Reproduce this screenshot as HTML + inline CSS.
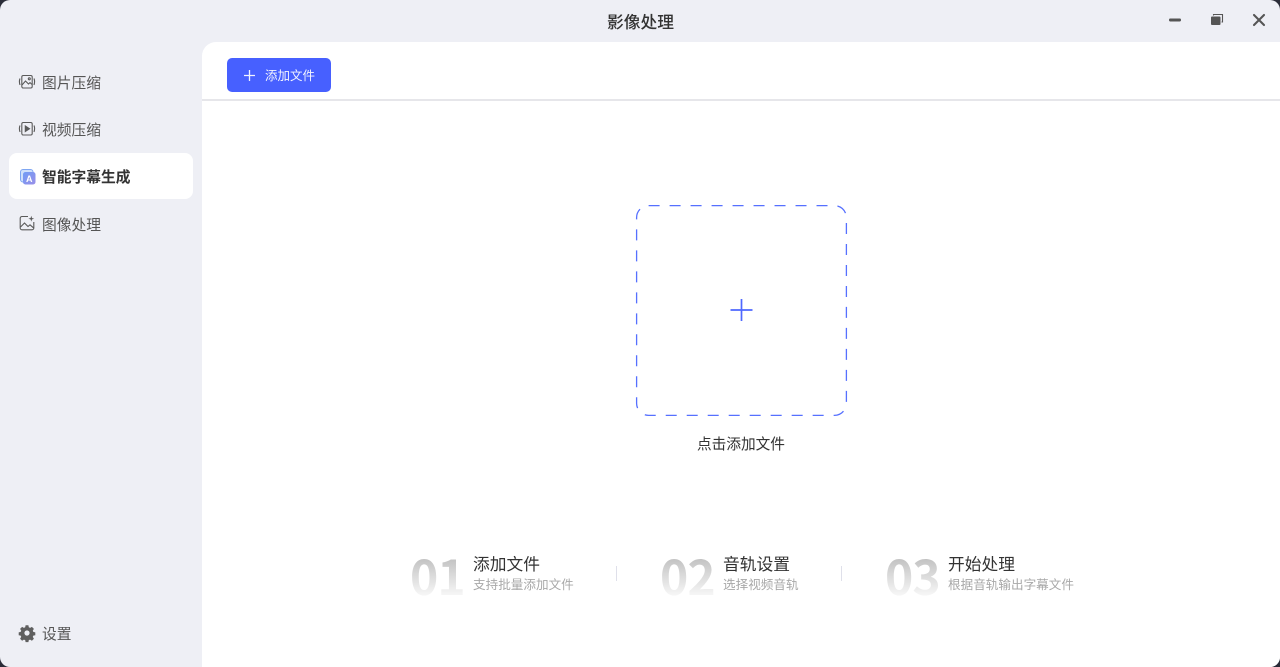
<!DOCTYPE html>
<html lang="zh"><head><meta charset="utf-8"><title>影像处理</title>
<style>
html,body{margin:0;padding:0;width:1280px;height:667px;overflow:hidden;background:#2a2c38}
*{box-sizing:border-box}
body{font-family:"Liberation Sans","Noto Sans CJK SC",sans-serif;color:#333}
#win{position:absolute;left:0;top:0;width:1280px;height:667px;background:#eeeff5;border-radius:10px;overflow:hidden}
.t{position:absolute;white-space:nowrap;line-height:1}
#main{position:absolute;left:202px;top:42px;width:1078px;height:625px;background:#fff;border-top-left-radius:14px}
#line{position:absolute;left:202px;top:99px;width:1078px;height:2px;background:#e6e6ea}
#btn{position:absolute;left:227px;top:58px;width:104px;height:34px;background:#4760ff;border-radius:5px}
#act{position:absolute;left:9px;top:153px;width:184px;height:46px;background:#fff;border-radius:8px}
.nav{left:42px;font-size:14.75px;color:#555}
.num{font-family:"Noto Sans CJK SC",sans-serif;font-size:48px;font-weight:700;letter-spacing:-1px;background:linear-gradient(180deg,#c2c2c2 18%,#f5f5f5 92%);-webkit-background-clip:text;background-clip:text;color:transparent;line-height:48px;height:48px}
.h{font-size:16.75px;color:#333}
.s{font-size:12.6px;color:#a8a8a8}
.sep{position:absolute;top:566px;width:1px;height:15px;background:#dfe0ea}
svg{position:absolute;overflow:visible}
</style></head><body>
<div id="win">
<div id="main"></div><div id="line"></div>
<div class="t" style="left:607px;top:15px;font-size:16.75px;font-weight:500;color:#333">影像处理</div>

<svg style="left:1168px;top:15px" width="14" height="10"><rect x="1" y="3.5" width="12" height="3" rx="1.2" fill="#555"/></svg>
<svg style="left:1210px;top:13px" width="14" height="13"><path d="M3.5 2.500V1.500H12.500V9H11.500" fill="none" stroke="#555" stroke-width="1.100"/><rect x="1" y="3.500" width="9.500" height="8.500" rx="1" fill="#555"/></svg>
<svg style="left:1252px;top:13px" width="14" height="14"><path d="M2 2L12 12M12 2L2 12" stroke="#555" stroke-width="2.100" stroke-linecap="round"/></svg>

<svg style="left:19px;top:74px" width="16" height="16" fill="none" stroke="#5a5a5a" stroke-width="1.100"><rect x="2.800" y="1.500" width="10.400" height="12.500" rx="1.500"/><path d="M3 11L6.500 7L9.500 10L11 8.600L13 10.500"/><circle cx="10.300" cy="4.800" r="1"/><path d="M1 4.500Q-.2 7.500 1 11M15 4.500Q16.200 7.500 15 11"/></svg>
<div class="t nav" style="top:77px">图片压缩</div>

<svg style="left:19px;top:121px" width="16" height="16" fill="none" stroke="#5a5a5a" stroke-width="1.100"><rect x="2.800" y="1.500" width="10.400" height="12.500" rx="1.500"/><path d="M6.300 5L10.500 7.800L6.300 10.500Z" fill="#5a5a5a"/><path d="M1 4.500Q-.2 7.500 1 11M15 4.500Q16.200 7.500 15 11"/></svg>
<div class="t nav" style="top:124px">视频压缩</div>

<div id="act"></div>
<svg style="left:20px;top:169px" width="16" height="16"><defs><linearGradient id="g" x1="0" y1="0" x2="1" y2="1"><stop offset="0" stop-color="#6f9cf5"/><stop offset="1" stop-color="#9a8fe8"/></linearGradient></defs><rect x=".5" y=".5" width="12.500" height="12.500" rx="2.500" fill="#cfe0fb" stroke="#7fa6f2"/><rect x="3" y="3" width="12.500" height="12.500" rx="2.500" fill="url(#g)"/><text x="9.200" y="12.800" font-size="9" font-weight="700" fill="#fff" text-anchor="middle" font-family="Liberation Sans">A</text></svg>
<div class="t" style="left:42px;top:171px;font-size:14.75px;font-weight:700;color:#333">智能字幕生成</div>

<svg style="left:19px;top:215px" width="16" height="16" fill="none" stroke="#5a5a5a" stroke-width="1.100"><path d="M9 1.500H3A1.800 1.800 0 0 0 1.200 3.300V13A1.800 1.800 0 0 0 3 14.800H13A1.800 1.800 0 0 0 14.800 13V7"/><path d="M1.500 12L5.500 8L9 11.500L11 9.800L14.500 12.800"/><path d="M12.300 .8L13 3L15.200 3.700L13 4.400L12.300 6.600L11.600 4.400L9.400 3.700L11.600 3Z" fill="#5a5a5a" stroke="none"/></svg>
<div class="t nav" style="top:219px">图像处理</div>

<svg style="left:19px;top:625px" width="16" height="16" viewBox="0 0 16 16"><path fill="#5f5f5f" fill-rule="evenodd" d="M6.600 .3h2.800l.4 2 1.300.6 1.800-1 2 2-1.100 1.700.5 1.300 2 .5v2.800l-2 .4-.5 1.300 1.100 1.800-2 2-1.800-1.100-1.300.5-.4 2H6.600l-.4-2-1.300-.5-1.800 1.100-2-2 1.100-1.800-.5-1.300-2-.4V7.400l2-.5.5-1.300-1.100-1.700 2-2 1.800 1 1.300-.6zM8 5.400a2.600 2.600 0 1 0 0 5.200a2.600 2.600 0 0 0 0-5.200z"/></svg>
<div class="t nav" style="top:628px">设置</div>

<div id="btn"></div>
<svg style="left:243px;top:69px" width="13" height="13"><path d="M6.500 1V12M1 6.500H12" stroke="#f0f2ff" stroke-width="1.300"/></svg>
<div class="t" style="left:265px;top:70px;font-size:12.500px;color:#f4f5ff">添加文件</div>

<svg style="left:636px;top:205px" width="211" height="211"><rect x=".6" y=".6" width="209.800" height="209.800" rx="12" fill="none" stroke="#5670ff" stroke-width="1.300" stroke-dasharray="11 9.990"/></svg>
<svg style="left:730px;top:299px" width="23" height="23"><path d="M11.500 0V22M.5 11H22.500" stroke="#4f68ff" stroke-width="1.700"/></svg>
<div class="t" style="left:697px;top:438px;font-size:14.670px;color:#333">点击添加文件</div>

<div class="t num" style="left:410px;top:550px">01</div>
<div class="t h" style="left:473px;top:557px">添加文件</div>
<div class="t s" style="left:473px;top:579px">支持批量添加文件</div>
<div class="sep" style="left:616px"></div>

<div class="t num" style="left:660px;top:550px">02</div>
<div class="t h" style="left:723px;top:557px">音轨设置</div>
<div class="t s" style="left:723px;top:579px">选择视频音轨</div>
<div class="sep" style="left:841px"></div>

<div class="t num" style="left:885px;top:550px">03</div>
<div class="t h" style="left:948px;top:557px">开始处理</div>
<div class="t s" style="left:948px;top:579px">根据音轨输出字幕文件</div>
</div>
</body></html>
